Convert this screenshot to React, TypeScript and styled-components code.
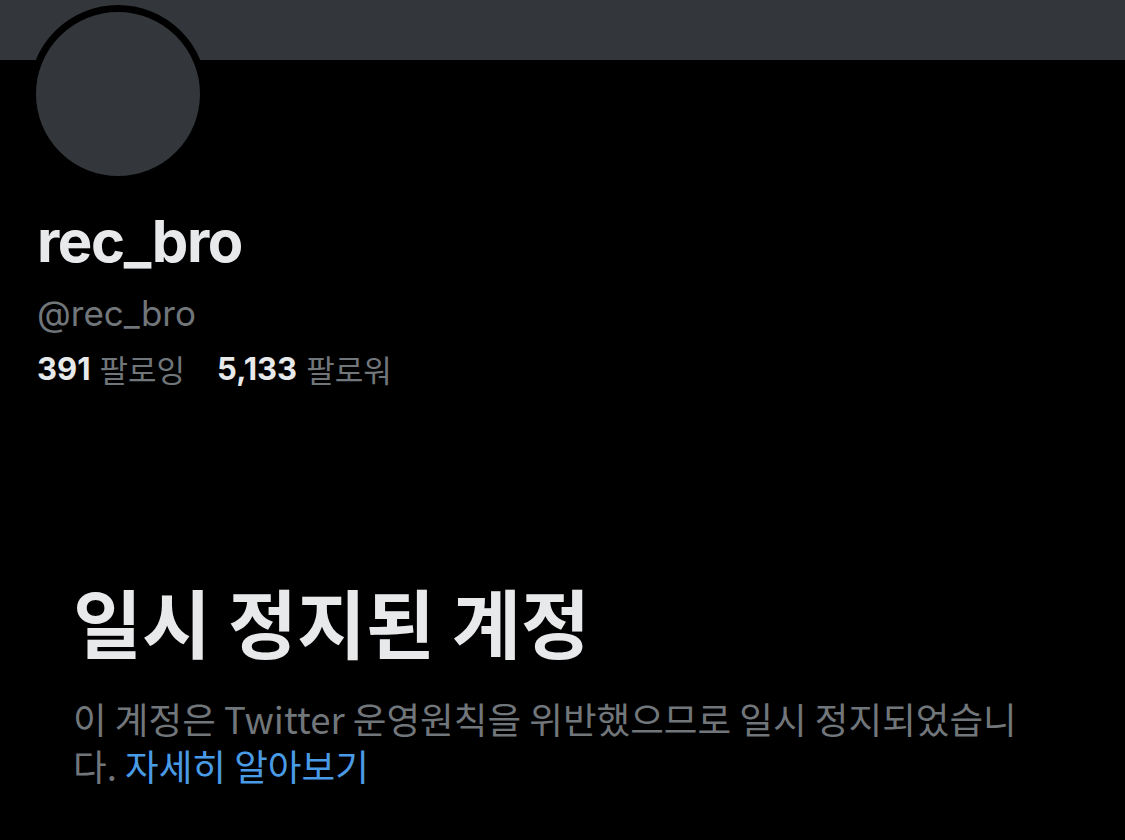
import React from "react"
import styled, { createGlobalStyle } from "styled-components"

const GlobalStyle = createGlobalStyle`
  html, body {
    margin: 0;
    padding: 0;
    background: #000;
  }
  body {
    font-family: "Inter", "Noto Sans CJK KR", sans-serif;
    color: #e7e9ea;
  }
`

const Page = styled.main`
  width: 1125px;
  height: 840px;
  background: #000;
  overflow: hidden;
`

const Banner = styled.div`
  height: 60px;
  background: #33363a;
`

const ProfileHeader = styled.section`
  padding: 0 0 0 37px;
`

const Avatar = styled.div`
  width: 164px;
  height: 164px;
  margin: -55px 0 0 -8px;
  border: 7px solid #000;
  border-radius: 50%;
  background: #33363a;
`

const Name = styled.h1`
  margin: 26px 0 0;
  font-family: "Inter", sans-serif;
  font-size: 58px;
  font-weight: 700;
  letter-spacing: -1.4px;
  line-height: 64px;
  color: #e7e9ea;
`

const Handle = styled.div`
  margin-top: 18px;
  font-family: "Inter", sans-serif;
  font-size: 35px;
  line-height: 44px;
  color: #71767b;
`

const Stats = styled.div`
  display: flex;
  gap: 32px;
  margin-top: 14px;
  font-size: 31px;
  line-height: 40px;
`

const Stat = styled.span`
  display: flex;
  gap: 9px;
  color: #71767b;
  font-family: "Noto Sans CJK KR", sans-serif;

  b {
    font-family: "Inter", sans-serif;
    font-weight: 700;
    color: #e7e9ea;
  }
`

const Notice = styled.section`
  padding: 184px 0 0 73px;
`

const NoticeTitle = styled.h2`
  margin: 0;
  font-family: "Noto Sans CJK KR", sans-serif;
  font-size: 75px;
  font-weight: 700;
  line-height: 96px;
  color: #e7e9ea;
`

const NoticeText = styled.p`
  margin: 26px 0 0;
  width: 980px;
  font-family: "Noto Sans CJK KR", sans-serif;
  font-size: 36.6px;
  line-height: 47px;
  color: #71767b;

  a {
    color: #4a9be6;
    text-decoration: none;
  }
`

export default function App() {
  return (
    <>
      <GlobalStyle />
      <Page>
        <Banner />
        <ProfileHeader>
          <Avatar />
          <Name>rec_bro</Name>
          <Handle>@rec_bro</Handle>
          <Stats>
            <Stat>
              <b>391</b> 팔로잉
            </Stat>
            <Stat>
              <b>5,133</b> 팔로워
            </Stat>
          </Stats>
        </ProfileHeader>
        <Notice>
          <NoticeTitle>일시 정지된 계정</NoticeTitle>
          <NoticeText>
            이 계정은 Twitter 운영원칙을 위반했으므로 일시 정지되었습니다.{" "}
            <a href="#">자세히 알아보기</a>
          </NoticeText>
        </Notice>
      </Page>
    </>
  )
}
